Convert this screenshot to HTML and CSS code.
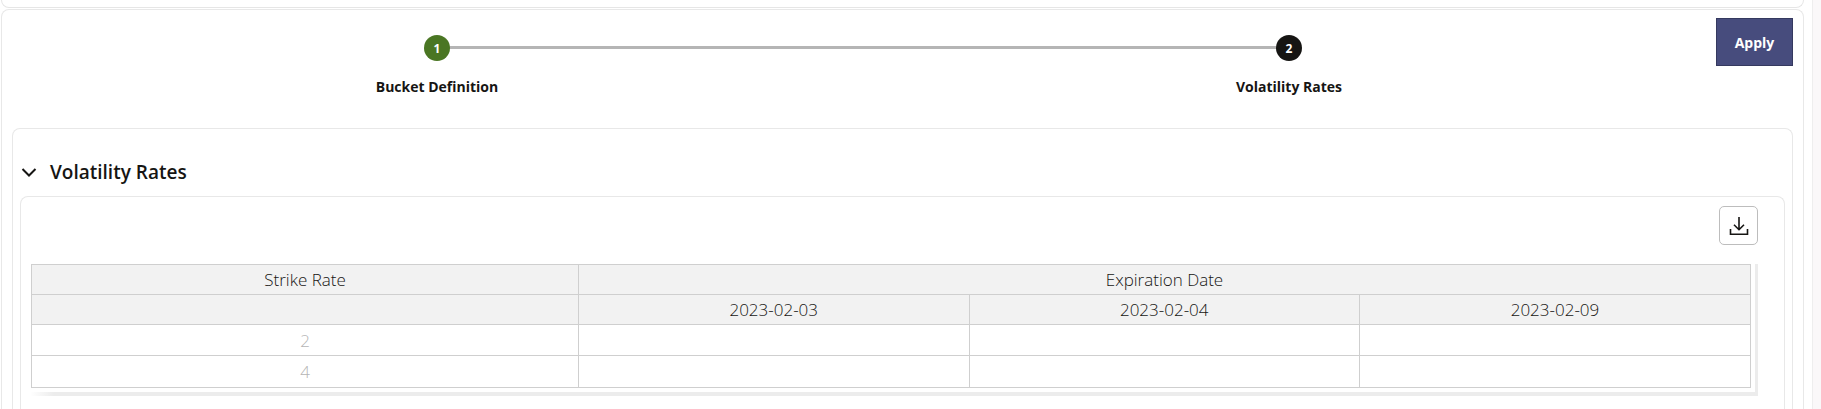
FILE: index.html
```html
<!DOCTYPE html>
<html lang="en">
<head>
<meta charset="utf-8">
<title>Volatility Rates</title>
<link rel="stylesheet" href="styles.css">
</head>
<body>
<div class="content">
<div class="top-card"></div>
<main class="page-card">
  <div class="wizard">
    <div class="steps">
      <div class="step">
        <span class="dot dot-done">1</span>
        <span class="step-label">Bucket Definition</span>
      </div>
      <div class="step">
        <span class="dot dot-current">2</span>
        <span class="step-label">Volatility Rates</span>
      </div>
      <span class="connector"></span>
    </div>
    <button class="apply" type="button">Apply</button>
  </div>
  <section class="section">
    <h2 class="section-head">
      <svg class="chevron" width="16" height="16" viewBox="0 0 16 16"><path d="M1.5 5l6.5 6.5L14.500 5" fill="none" stroke="#161513" stroke-width="2"/></svg>
      Volatility Rates
    </h2>
    <div class="panel">
      <div class="toolbar">
        <button class="icon-btn" type="button" aria-label="Download">
          <svg width="20" height="20" viewBox="0 0 20 20"><path d="M10 1v12.500M5 8.700l5 5 5-5M1.500 13v5.200h17V13" fill="none" stroke="#161513" stroke-width="1.600"/></svg>
        </button>
      </div>
      <div class="table-wrap">
        <table class="grid">
          <colgroup>
            <col class="col-strike"><col class="col-date"><col class="col-date"><col>
          </colgroup>
          <thead>
            <tr><th>Strike Rate</th><th colspan="3">Expiration Date</th></tr>
            <tr><th></th><th>2023-02-03</th><th>2023-02-04</th><th>2023-02-09</th></tr>
          </thead>
          <tbody>
            <tr class="row-a"><td class="num">2</td><td></td><td></td><td></td></tr>
            <tr class="row-b"><td class="num">4</td><td></td><td></td><td></td></tr>
          </tbody>
        </table>
      </div>
    </div>
  </section>
</main>
</div>
<div class="scroll-track"></div>
</body>
</html>
```
FILE: styles.css
```css
* { box-sizing: border-box; }
body {
  margin: 0;
  height: 409px;
  overflow: hidden;
  background: #fff;
  font-family: "Open Sans", "Noto Sans", sans-serif;
  color: #161513;
  display: flex;
}
.content {
  flex: 1;
  min-width: 0;
  padding: 0 8px 0 1px;
}
.scroll-track {
  width: 9px;
  background: #faf8f9;
  border-left: 1px solid #eeeeee;
}
.top-card {
  height: 8px;
  border: 1px solid #e6e6e6;
  border-top: 0;
  border-radius: 0 0 8px 8px;
}
.page-card {
  margin-top: 1px;
  height: 400px;
  border: 1px solid #e8e8e8;
  border-bottom: 0;
  border-radius: 8px 8px 0 0;
  padding: 8px 10px 0 10px;
}
.wizard {
  display: flex;
  height: 110px;
  align-items: flex-start;
}
.steps {
  position: relative;
  flex: 1;
  display: flex;
  justify-content: space-between;
  padding: 17px 357px 0 355px;
}
.step {
  position: relative;
  z-index: 1;
  width: 140px;
  display: flex;
  flex-direction: column;
  align-items: center;
  gap: 17px;
}
.connector {
  position: absolute;
  left: 425px;
  right: 427px;
  top: 28px;
  height: 3px;
  background: #b5b5b5;
}
.dot {
  width: 26px;
  height: 26px;
  border-radius: 50%;
  display: flex;
  align-items: center;
  justify-content: center;
  color: #fff;
  font-size: 12px;
  font-weight: 700;
}
.dot-done { background: #4a7623; }
.dot-current { background: #161513; }
.step-label {
  font-size: 14px;
  font-weight: 700;
  line-height: 18px;
  white-space: nowrap;
}
.apply {
  width: 77px;
  height: 48px;
  background: #474c7d;
  border: 1px solid #35395f;
  color: #fff;
  font: 700 14px "Open Sans", sans-serif;
  padding: 0;
}
.section {
  height: 281px;
  border: 1px solid #e8e8e8;
  border-bottom: 0;
  border-radius: 8px 8px 0 0;
  padding: 0 7px;
}
.section-head {
  margin: 0;
  height: 67px;
  padding: 19px 0 0 1px;
  display: flex;
  align-items: center;
  gap: 13px;
  font-size: 19px;
  font-weight: 600;
  line-height: 24px;
}
.panel {
  height: 213px;
  border: 1px solid #e8e8e8;
  border-bottom: 0;
  border-radius: 8px 8px 0 0;
  padding: 9px 26px 0 10px;
}
.toolbar {
  display: flex;
  justify-content: flex-end;
  height: 58px;
}
.icon-btn {
  width: 39px;
  height: 39px;
  padding: 0;
  background: #fff;
  border: 1px solid #bdbdbd;
  border-radius: 5px;
  display: flex;
  align-items: center;
  justify-content: center;
}
.table-wrap {
  width: 1727px;
  padding: 0 4px 4px 0;
  border-style: solid;
  border-width: 0 3px 4px 0;
  border-image: linear-gradient(to right, #ffffff, #ececec 24px) 1;
}
.grid {
  width: 1720px;
  border-collapse: collapse;
  table-layout: fixed;
  font-size: 17px;
  font-weight: 300;
}
.col-strike { width: 547px; }
.col-date { width: 390.500px; }
.grid th, .grid td {
  border: 1px solid #cfcfcf;
  text-align: center;
  padding: 0;
  font-weight: 300;
  height: 30px;
}
.grid th { background: #f2f2f2; line-height: 20px; }
.grid .row-a td { height: 31px; }
.grid .row-b td { height: 32px; }
.grid .num { color: #b5b5b5; }
```
